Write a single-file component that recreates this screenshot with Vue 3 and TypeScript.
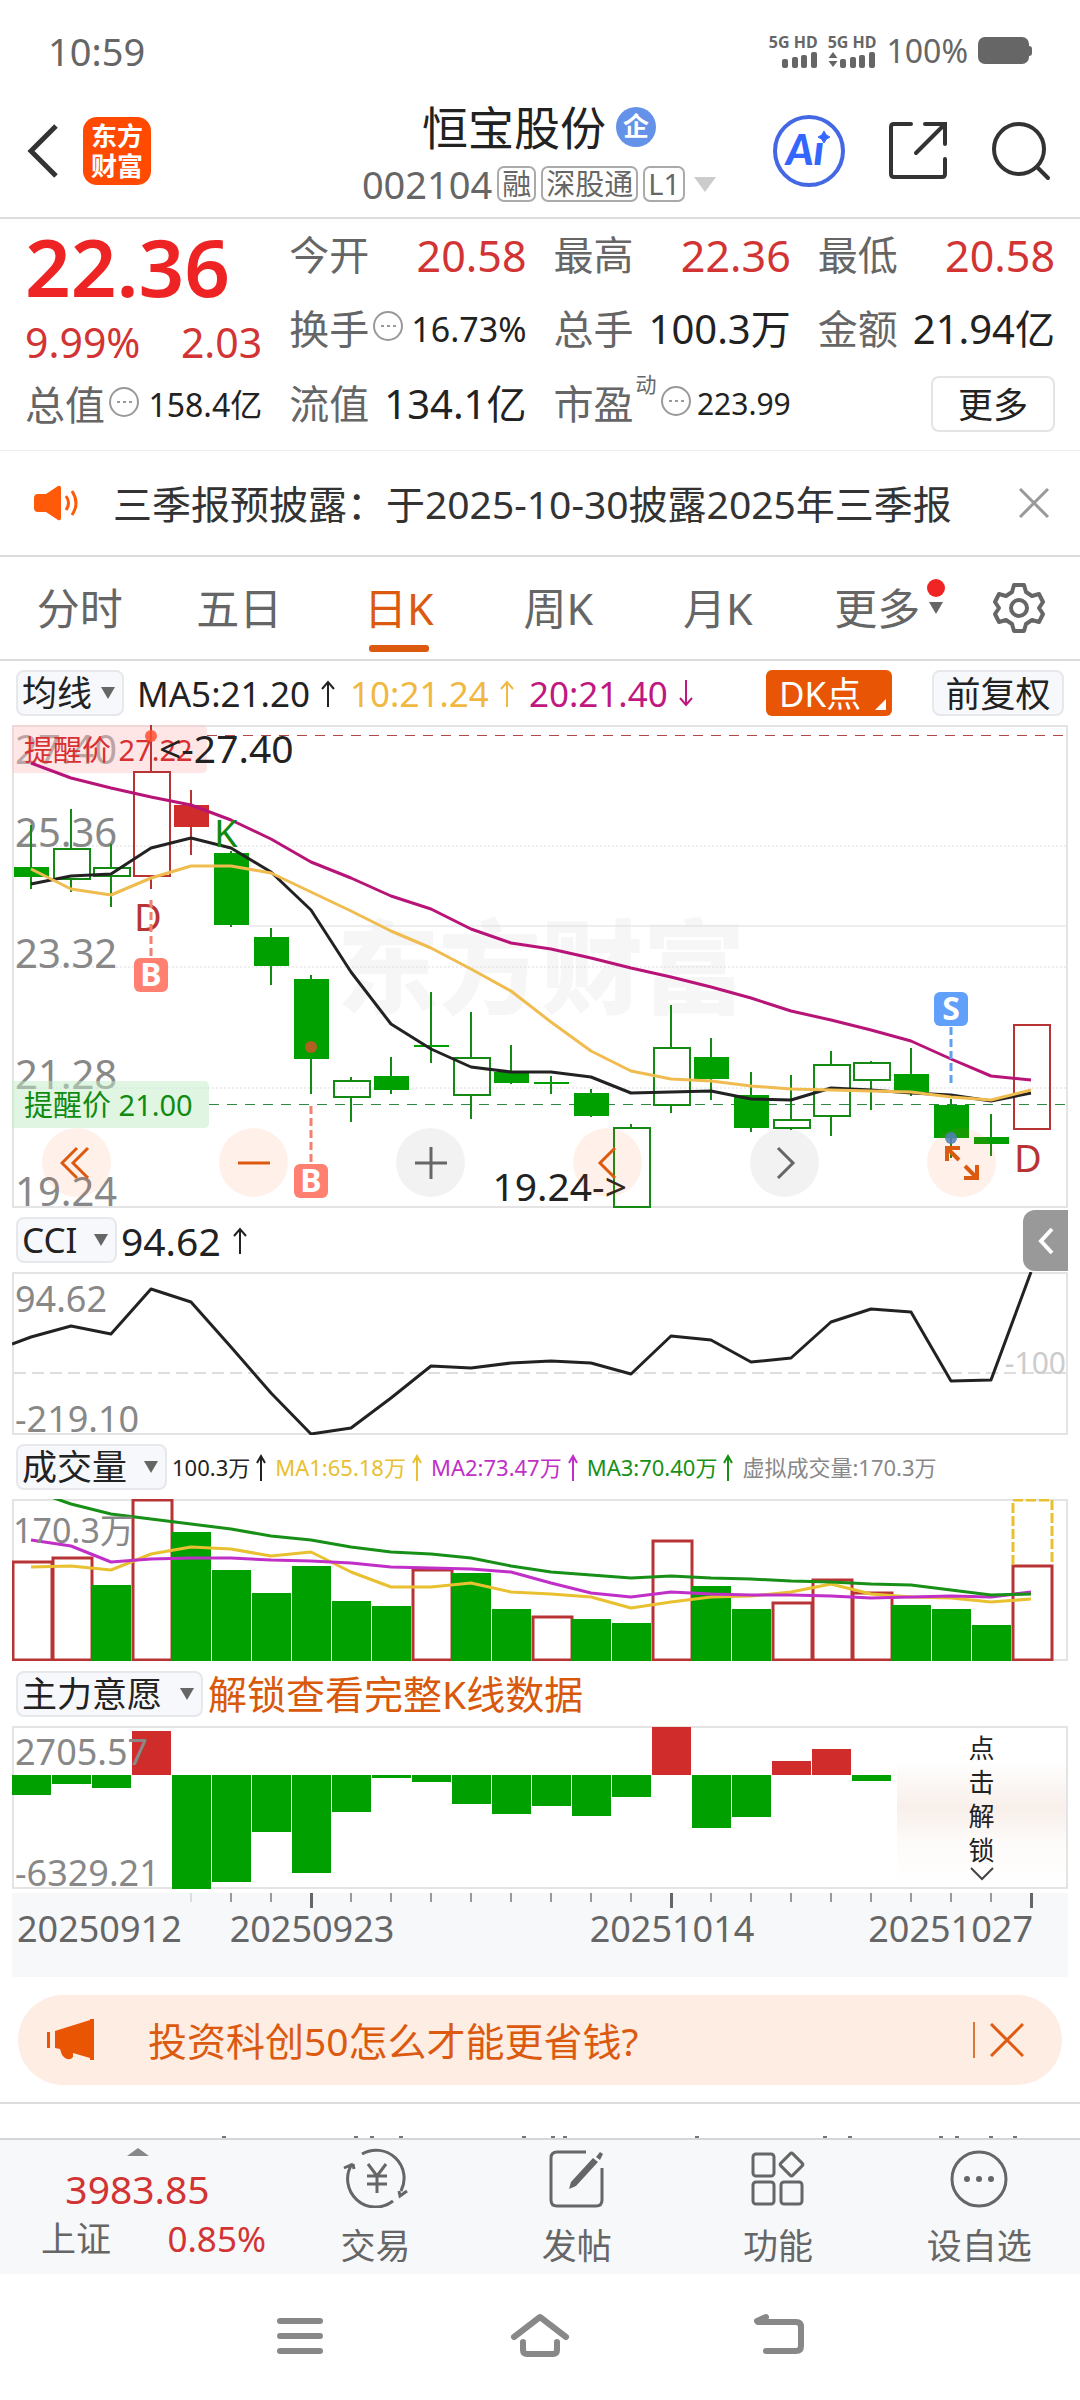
<script setup lang="ts">
import { ref } from 'vue'

type Kind = 'down' | 'hollow' | 'up' | 'solidUp'

interface Candle {
  high: number
  top: number
  bottom: number
  low: number
  kind: Kind
}

const STEP = 40
const cx = (i: number): number => 19 + STEP * i

const toPoints = (ys: number[]): string => ys.map((y, i) => `${cx(i)},${y}`).join(' ')

const rawCandles: [number, number, number, number, Kind][] = [
  [100, 142, 152, 164, 'down'],
  [84, 123, 155, 167, 'hollow'],
  [119, 142, 152, 182, 'hollow'],
  [0, 46, 152, 164, 'up'],
  [65, 80, 102, 130, 'solidUp'],
  [126, 128, 200, 202, 'down'],
  [203, 212, 241, 260, 'down'],
  [250, 254, 334, 369, 'down'],
  [352, 355, 373, 397, 'hollow'],
  [332, 351, 365, 369, 'down'],
  [267, 320, 322, 338, 'down'],
  [287, 332, 371, 394, 'hollow'],
  [320, 347, 358, 359, 'down'],
  [351, 357, 359, 369, 'down'],
  [364, 368, 391, 392, 'down'],
  [399, 402, 483, 483, 'hollow'],
  [280, 322, 381, 388, 'hollow'],
  [313, 332, 354, 375, 'down'],
  [347, 370, 403, 407, 'down'],
  [350, 394, 404, 405, 'hollow'],
  [326, 339, 392, 411, 'hollow'],
  [336, 337, 356, 385, 'hollow'],
  [323, 349, 368, 371, 'down'],
  [374, 380, 413, 433, 'down'],
  [389, 412, 419, 431, 'down'],
  [299, 299, 405, 405, 'up'],
]
const candles: Candle[] = rawCandles.map(([high, top, bottom, low, kind]) => ({ high, top, bottom, low, kind }))
const isFilled = (k: Kind): boolean => k === 'down' || k === 'solidUp'
const candleColor = (k: Kind): string => (k === 'up' ? '#b83434' : k === 'solidUp' ? '#d02c2c' : k === 'down' ? '#00a000' : '#148a14')
const wickColor = (k: Kind): string => (k === 'up' || k === 'solidUp' ? '#b83434' : '#148a14')

const ma5 = toPoints([159, 151, 149, 123, 113, 123, 147, 185, 247, 299, 324, 342, 347, 347, 352, 368, 367, 366, 374, 375, 363, 365, 368, 370, 376, 368])
const ma10 = toPoints([144, 164, 170, 153, 141, 141, 148, 167, 186, 206, 223, 244, 266, 297, 326, 346, 354, 356, 361, 364, 365, 366, 367, 372, 375, 365])
const ma20 = toPoints([38, 53, 63, 72, 80, 95, 114, 137, 153, 171, 184, 204, 218, 224, 233, 243, 252, 262, 273, 286, 295, 305, 316, 334, 351, 355])

const priceLabels = [
  { text: '27.40', y: 39 },
  { text: '25.36', y: 122 },
  { text: '23.32', y: 243 },
  { text: '21.28', y: 364 },
  { text: '19.24', y: 481 },
]

const cci = '0,72 ' + toPoints([65, 54, 62, 17, 30, 75, 121, 162, 156, 126, 94, 96, 91, 89, 91, 102, 64, 68, 90, 86, 50, 37, 40, 109, 108, 0])

const volumes: { top: number; up: boolean }[] = [63, 59, 86, 1, 33, 71, 94, 67, 102, 107, 71, 74, 110, 118, 120, 124, 42, 87, 110, 104, 81, 94, 106, 110, 126, 67].map(
  (top, i) => ({ top, up: [0, 1, 3, 10, 13, 16, 19, 20, 21, 25].includes(i) }),
)
const vma1 = toPoints([68, 67, 71, 55, 48, 50, 57, 53, 73, 88, 88, 84, 93, 95, 98, 109, 103, 98, 97, 93, 85, 95, 98, 99, 103, 100])
const vma2 = toPoints([41, 47, 63, 60, 59, 59, 61, 62, 64, 68, 69, 70, 73, 84, 94, 98, 93, 95, 96, 96, 97, 99, 98, 97, 98, 93])
const vma3 = toPoints([-9, 5, 15, 20, 25, 30, 37, 41, 48, 53, 55, 59, 67, 73, 76, 79, 77, 79, 80, 82, 83, 85, 86, 91, 96, 95])

const ZERO = 49
const flows: number[] = [69, 58, 62, 5, 163, 156, 106, 147, 86, 52, 56, 78, 88, 80, 90, 71, 1, 102, 91, 35, 23, 55]

const ticks = Array.from({ length: 22 }, (_, k) => k + 4)
const majorTicks = [7, 16, 25]

const tabs = ['分时', '五日', '日K', '周K', '月K', '更多']
const active = ref('日K')

const clippedMarks = [222, 354, 370, 399, 522, 551, 563, 695, 823, 848, 939, 955, 989, 1013]
</script>

<template>
  <div class="page">
    <div class="status">
      <span class="clock">10:59</span>
      <div class="status-right">
        <div v-for="n in 2" :key="n" class="sim">
          <span class="net">5G HD</span>
          <svg width="48" height="17" viewBox="0 0 48 17" fill="#666">
            <path v-if="n === 2" d="M5 1l4.500 6h-9zM5 16l4.500-6h-9z" />
            <rect x="12" y="8" width="6" height="9" rx="2" />
            <rect x="22" y="6" width="6" height="11" rx="2" />
            <rect x="31" y="4" width="6" height="13" rx="2" />
            <rect x="41" y="1" width="6" height="16" rx="2" />
          </svg>
        </div>
        <span class="percent">100%</span>
        <svg width="54" height="28" viewBox="0 0 54 28" fill="#666">
          <rect width="51" height="27" rx="7" />
          <path d="M51 9q3 0 3 3v4q0 3-3 3z" />
        </svg>
      </div>
    </div>

    <header class="top">
      <div class="top-left">
        <button class="bare" aria-label="返回">
          <svg width="32" height="54" viewBox="0 0 32 54" fill="none" stroke="#333" stroke-width="5"><path d="M29 2L4 27l25 25" /></svg>
        </button>
        <a class="logo" href="#"><span>东方</span><span>财富</span></a>
      </div>
      <div class="title-block">
        <h1>恒宝股份<span class="badge">企</span></h1>
        <div class="code-row">
          <span class="code">002104</span>
          <span class="tag">融</span><span class="tag">深股通</span><span class="tag">L1</span>
          <svg class="code-arrow" width="22" height="15" viewBox="0 0 22 15"><path d="M0 0h22l-11 15z" fill="#ccc" /></svg>
        </div>
      </div>
      <div class="top-right">
        <button class="bare" aria-label="Ai">
          <svg width="72" height="72" viewBox="0 0 72 72">
            <circle cx="36" cy="36" r="34" fill="none" stroke="#4468e4" stroke-width="4" />
            <text x="13" y="50" class="ai">Aı</text>
            <path d="M51 16q1.500 5 6 6-4.500 1.500-6 6-1.500-4.500-6-6 4.500-1 6-6z" fill="#3366ff" stroke="#3366ff" stroke-width="1" />
          </svg>
        </button>
        <button class="bare" aria-label="分享">
          <svg width="60" height="60" viewBox="0 0 60 60" fill="none" stroke="#333" stroke-width="4" stroke-linecap="round">
            <path d="M23 3H6Q3 3 3 6v47q0 3 3 3h48q3 0 3-3V38M37 3h20v20M57 3L28 32" />
          </svg>
        </button>
        <button class="bare" aria-label="搜索">
          <svg width="60" height="60" viewBox="0 0 60 60" fill="none" stroke="#333" stroke-width="4" stroke-linecap="round">
            <circle cx="28" cy="28" r="25" /><path d="M46 46l11 11" />
          </svg>
        </button>
      </div>
    </header>

    <section class="quote">
      <div class="col">
        <div class="last-price">22.36</div>
        <div class="cell change"><span>9.99%</span><span>2.03</span></div>
        <div class="cell r3">
          <span class="lab">总值<svg class="dots" width="31" height="31" viewBox="0 0 31 31"><circle cx="15" cy="15" r="14" /><path d="M8 15h3M14 15h3M20 15h3" /></svg></span>
          <span class="val mid">158.4亿</span>
        </div>
      </div>
      <div class="col">
        <div class="cell r1"><span class="lab">今开</span><span class="val red">20.58</span></div>
        <div class="cell r2">
          <span class="lab">换手<svg class="dots" width="31" height="31" viewBox="0 0 31 31"><circle cx="15" cy="15" r="14" /><path d="M8 15h3M14 15h3M20 15h3" /></svg></span>
          <span class="val turn">16.73%</span>
        </div>
        <div class="cell r3b"><span class="lab">流值</span><span class="val">134.1亿</span></div>
      </div>
      <div class="col">
        <div class="cell r1"><span class="lab">最高</span><span class="val red">22.36</span></div>
        <div class="cell r2"><span class="lab">总手</span><span class="val">100.3万</span></div>
        <div class="cell r3b">
          <span class="lab">市盈<sup>动</sup><svg class="dots" width="31" height="31" viewBox="0 0 31 31"><circle cx="15" cy="15" r="14" /><path d="M8 15h3M14 15h3M20 15h3" /></svg></span>
          <span class="val small">223.99</span>
        </div>
      </div>
      <div class="col">
        <div class="cell r1"><span class="lab">最低</span><span class="val red">20.58</span></div>
        <div class="cell r2"><span class="lab">金额</span><span class="val">21.94亿</span></div>
        <div class="cell r3b end"><button class="more">更多</button></div>
      </div>
    </section>

    <section class="notice">
      <svg width="46" height="36" viewBox="0 0 46 36" fill="none" stroke="#ff5a0a" stroke-width="3">
        <path d="M4 9h8L24 1q3-1 3 2v30q0 3-3 2L12 27H4q-4 0-4-4V13q0-4 4-4z" fill="#ff5a0a" stroke="none" />
        <path d="M32 11q5 7 0 14" /><path d="M38 6q8 12 0 24" />
      </svg>
      <a href="#" class="notice-text">三季报预披露：于2025-10-30披露2025年三季报</a>
      <button class="bare" aria-label="关闭">
        <svg width="30" height="30" viewBox="0 0 30 30" stroke="#999" stroke-width="3"><path d="M1 1l28 28M29 1L1 29" /></svg>
      </button>
    </section>

    <nav class="tabs">
      <button v-for="t in tabs" :key="t" class="tab" :class="{ on: t === active }" @click="active = t">
        {{ t }}
        <span v-if="t === '更多'" class="tab-extra">
          <i class="red-dot"></i>
          <svg width="14" height="12" viewBox="0 0 14 12"><path d="M0 0h14L7 12z" fill="#666" /></svg>
        </span>
      </button>
      <button class="bare gear" aria-label="设置">
        <svg width="52" height="52" viewBox="0 0 52 52" fill="none" stroke="#666" stroke-width="4" stroke-linejoin="round">
          <path d="M21 3h10l2 7 6 4 7-2 4 8-4 6 4 6-4 8-7-2-6 4-2 7H21l-2-7-6-4-7 2-4-8 4-6-4-6 4-8 7 2 6-4z" />
          <circle cx="26" cy="26" r="8" />
        </svg>
      </button>
    </nav>

    <main class="charts">
      <div class="bar">
        <label class="pick p0"><select aria-label="均线"><option>均线</option></select><i class="caret"></i></label>
        <div class="ma">
          <span>MA5:21.20<svg class="arr" width="14" height="27" viewBox="0 0 14 27"><path d="M7 27V2M1 9l6-7 6 7" /></svg></span>
          <span class="yel">10:21.24<svg class="arr" width="14" height="27" viewBox="0 0 14 27"><path d="M7 27V2M1 9l6-7 6 7" /></svg></span>
          <span class="mag">20:21.40<svg class="arr" width="14" height="27" viewBox="0 0 14 27"><path d="M7 0v25M1 18l6 7 6-7" /></svg></span>
        </div>
        <button class="dk">DK点</button>
        <button class="fq">前复权</button>
      </div>

      <div class="k-wrap">
        <svg class="chart" viewBox="0 0 1056 483">
          <text x="325" y="281" class="mark">东方财富</text>
          <g stroke="#ddd" stroke-width="1" stroke-dasharray="2 2">
            <path d="M0 121h1056M0 242h1056M0 363h1056" />
          </g>
          <path d="M236 201h820" stroke="#ddd" />
          <rect x="1" y="1" width="1054" height="481" fill="none" stroke="#e4e4e4" stroke-width="2" />
          <g class="ylab">
            <text v-for="l in priceLabels" :key="l.text" x="3" :y="l.y">{{ l.text }}</text>
          </g>
          <g stroke-dasharray="10 8" shape-rendering="crispEdges">
            <path d="M195 10h860" stroke="#b04848" />
            <path d="M197 379h858" stroke="#2c8a40" />
          </g>
          <path d="M0 0h190q5 0 5 5v38q0 5-5 5H0z" fill="#ffc8c8" fill-opacity=".45" />
          <path d="M0 356h192q5 0 5 5v37q0 5-5 5H0z" fill="#c4ecc8" fill-opacity=".5" />
          <text x="12" y="36" class="tip" fill="#d83030">提醒价 27.22</text>
          <text x="12" y="391" class="tip" fill="#108a10">提醒价 21.00</text>
          <g v-for="(c, i) in candles" :key="i">
            <path :d="`M${cx(i)} ${c.high}V${c.top}M${cx(i)} ${c.bottom}V${c.low}`" :stroke="wickColor(c.kind)" stroke-width="2" />
            <rect v-if="isFilled(c.kind)" :x="cx(i) - 17" :y="c.top" width="35" :height="c.bottom - c.top" :fill="candleColor(c.kind)" />
            <rect v-else :x="cx(i) - 17" :y="c.top + 1" width="36" :height="c.bottom - c.top - 2" fill="none" :stroke="candleColor(c.kind)" stroke-width="2" />
          </g>
          <g fill="none" stroke-width="3" stroke-linejoin="round">
            <polyline :points="ma5" stroke="#222" />
            <polyline :points="ma10" stroke="#f0bc50" />
            <polyline :points="ma20" stroke="#b81478" />
          </g>
          <text x="147" y="38" class="ext">&lt;-27.40</text>
          <text x="615" y="476" class="ext" text-anchor="end">19.24-&gt;</text>
          <text x="122" y="206" class="dkm" fill="#b83434">D</text>
          <text x="1002" y="447" class="dkm" fill="#b83434">D</text>
          <text x="202" y="122" class="dkm" fill="#108a10">K</text>
          <g stroke="#f4806f" stroke-width="3" stroke-dasharray="8 4">
            <path d="M139 175v57M299 381v57" />
            <path d="M939 302v56" stroke="#60a0f0" />
          </g>
          <circle cx="139" cy="11" r="6" fill="#ff5030" fill-opacity=".85" />
          <circle cx="299" cy="322" r="6" fill="#b06020" />
          <circle cx="939" cy="413" r="6" fill="#3f80c8" fill-opacity=".85" />
          <rect x="122" y="233" width="34" height="34" rx="6" fill="#ff7f70" />
          <rect x="282" y="439" width="34" height="34" rx="6" fill="#ff7f70" />
          <rect x="922" y="267" width="34" height="34" rx="6" fill="#60a0fa" />
          <g class="sig">
            <text x="139" y="261">B</text><text x="299" y="467">B</text><text x="939" y="295">S</text>
          </g>
        </svg>
        <div class="controls">
          <button class="round warm" aria-label="最左"><svg width="34" height="34" viewBox="0 0 34 34"><path d="M17 2L2 17l15 15M28 2L13 17l15 15" /></svg></button>
          <button class="round warm" aria-label="缩小"><svg width="34" height="34" viewBox="0 0 34 34"><path d="M1 17h32" /></svg></button>
          <button class="round" aria-label="放大"><svg width="34" height="34" viewBox="0 0 34 34"><path d="M1 17h32M17 1v32" /></svg></button>
          <button class="round warm" aria-label="左移"><svg width="22" height="34" viewBox="0 0 22 34"><path d="M18 2L3 17l15 15" /></svg></button>
          <button class="round" aria-label="右移"><svg width="22" height="34" viewBox="0 0 22 34"><path d="M4 2l15 15L4 32" /></svg></button>
          <button class="round warm" aria-label="全屏"><svg width="34" height="34" viewBox="0 0 34 34" class="thick"><path d="M2 15V2h13M2 2l12 12M32 19v13H19M32 32L20 20" /></svg></button>
        </div>
      </div>

      <div class="bar">
        <label class="pick p1"><select aria-label="CCI"><option>CCI</option></select><i class="caret"></i></label>
        <span class="cci-val">94.62<svg class="arr" width="14" height="27" viewBox="0 0 14 27"><path d="M7 27V2M1 9l6-7 6 7" /></svg></span>
        <button class="side" aria-label="展开"><svg width="18" height="28" viewBox="0 0 18 28"><path d="M15 2L4 14l11 12" fill="none" stroke="#fff" stroke-width="4" /></svg></button>
      </div>
      <svg class="chart" viewBox="0 0 1056 163">
        <rect x="1" y="1" width="1054" height="161" fill="none" stroke="#e4e4e4" stroke-width="2" />
        <path d="M2 101h1052" stroke="#ddd" stroke-width="2" stroke-dasharray="12 6" />
        <g class="sublab"><text x="3" y="40">94.62</text><text x="3" y="160">-219.10</text></g>
        <text x="1054" y="102" class="hundred" text-anchor="end">-100</text>
        <polyline :points="cci" fill="none" stroke="#222" stroke-width="3" stroke-linejoin="round" />
      </svg>

      <div class="bar">
        <label class="pick p2"><select aria-label="成交量"><option>成交量</option></select><i class="caret"></i></label>
        <div class="vol">
          <span>100.3万<svg class="arr" width="10" height="27" viewBox="0 0 10 27"><path d="M5 27V2M1 9l4-7 4 7" /></svg></span>
          <span class="vy">MA1:65.18万<svg class="arr" width="10" height="27" viewBox="0 0 10 27"><path d="M5 27V2M1 9l4-7 4 7" /></svg></span>
          <span class="vm">MA2:73.47万<svg class="arr" width="10" height="27" viewBox="0 0 10 27"><path d="M5 27V2M1 9l4-7 4 7" /></svg></span>
          <span class="vg">MA3:70.40万<svg class="arr" width="10" height="27" viewBox="0 0 10 27"><path d="M5 27V2M1 9l4-7 4 7" /></svg></span>
          <span class="vx">虚拟成交量:170.3万</span>
        </div>
      </div>
      <svg class="chart" viewBox="0 0 1056 162">
        <rect x="1" y="1" width="1054" height="160" fill="none" stroke="#e4e4e4" stroke-width="2" />
        <template v-for="(v, i) in volumes" :key="i">
          <rect v-if="v.up" :x="i * STEP + 1" :y="v.top" width="39" :height="161 - v.top" fill="#fff" stroke="#b83434" stroke-width="3" />
          <rect v-else :x="i * STEP" :y="v.top" width="39" :height="162 - v.top" fill="#00a000" />
        </template>
        <path d="M1001 66V1h39v65" fill="none" stroke="#e8c030" stroke-width="3" stroke-dasharray="10 3" />
        <g fill="none" stroke-width="3" stroke-linejoin="round">
          <polyline :points="vma1" stroke="#e8c030" />
          <polyline :points="vma2" stroke="#c030c8" />
          <polyline :points="vma3" stroke="#189018" />
        </g>
        <text x="1" y="44" class="vlab">170.3万</text>
      </svg>

      <div class="bar tall">
        <label class="pick p3"><select aria-label="主力意愿"><option>主力意愿</option></select><i class="caret"></i></label>
        <a href="#" class="unlock">解锁查看完整K线数据</a>
      </div>
      <div class="flow-wrap">
        <svg class="chart" viewBox="0 0 1056 163">
          <rect x="1" y="1" width="1054" height="161" fill="none" stroke="#e4e4e4" stroke-width="2" />
          <rect
            v-for="(v, i) in flows"
            :key="i"
            :x="i * STEP"
            :y="Math.min(v, ZERO)"
            width="39"
            :height="Math.abs(v - ZERO)"
            :fill="v < ZERO ? '#d02c2c' : '#00a000'"
          />
          <g class="sublab"><text x="3" y="39">2705.57</text><text x="3" y="160">-6329.21</text></g>
        </svg>
        <button class="lock">
          <span>点</span><span>击</span><span>解</span><span>锁</span>
          <svg width="24" height="14" viewBox="0 0 24 14"><path d="M1 1l11 11L23 1" fill="none" stroke="#444" stroke-width="2" /></svg>
        </button>
      </div>
      <svg class="chart axis" viewBox="0 0 1056 84">
        <rect width="1056" height="84" fill="#f7f8fa" />
        <rect
          v-for="t in ticks"
          :key="t"
          :x="cx(t) - 1"
          y="0"
          :width="majorTicks.includes(t) ? 3 : 2"
          :height="majorTicks.includes(t) ? 15 : 9"
          :fill="t === 4 ? '#ddd' : majorTicks.includes(t) ? '#666' : '#999'"
        />
        <text x="5" y="49">20250912</text>
        <text x="300" y="49" text-anchor="middle">20250923</text>
        <text x="660" y="49" text-anchor="middle">20251014</text>
        <text x="1021" y="49" text-anchor="end">20251027</text>
      </svg>
    </main>

    <aside class="promo">
      <svg width="48" height="42" viewBox="0 0 48 42" fill="#ea5504">
        <path d="M0 13h3v16H0zM8 12L43 1v38L26 34v4q-3 4-8 1l-3-3-2-6-5-1zM43 0h4v41h-4z" />
      </svg>
      <a href="#">投资科创50怎么才能更省钱?</a>
      <i class="vline"></i>
      <button class="bare" aria-label="关闭">
        <svg width="34" height="34" viewBox="0 0 34 34" stroke="#e05a10" stroke-width="3"><path d="M1 1l32 32M33 1L1 33" /></svg>
      </button>
    </aside>

    <div class="under">
      <svg class="clip" viewBox="0 0 1080 2"><rect v-for="m in clippedMarks" :key="m" :x="m" y="0" width="4" height="2" fill="#777" /></svg>
    </div>

    <nav class="dock">
      <a class="index" href="#">
        <svg width="22" height="8" viewBox="0 0 22 8"><path d="M0 8L11 0l11 8z" fill="#888" /></svg>
        <span class="idx">3983.85</span>
        <span class="idx-row"><span>上证</span><span class="red2">0.85%</span></span>
      </a>
      <button class="item">
        <svg width="66" height="60" viewBox="0 0 66 60" fill="none" stroke="#666" stroke-width="3">
          <path d="M19 6A28 28 0 0 1 58 43M50 53A28 28 0 0 1 9 16M1 20l9-4M10 16l1 5M56 43l1 5 7-5" />
          <path d="M25 16l9 12 9-12M34 28v17M24 28h20M24 36h20" />
        </svg>交易
      </button>
      <button class="item">
        <svg width="56" height="60" viewBox="0 0 56 60" fill="none" stroke="#666" stroke-width="3">
          <path d="M37 4H8Q2 4 2 10v42q0 6 6 6h39q6 0 6-6V20" />
          <path d="M44 10l5 4-22 24-7 3 2-7z" fill="#666" stroke="none" /><path d="M47 9l4-5 3 2-3 6z" fill="#666" stroke="none" />
        </svg>发帖
      </button>
      <button class="item">
        <svg width="56" height="60" viewBox="0 0 56 60" fill="none" stroke="#666" stroke-width="3">
          <rect x="3" y="6" width="21" height="22" rx="3" /><rect x="3" y="34" width="21" height="22" rx="3" /><rect x="31" y="34" width="21" height="22" rx="3" />
          <rect x="33" y="8" width="17" height="17" rx="2" transform="rotate(45 41.500 16.500)" />
        </svg>功能
      </button>
      <button class="item">
        <svg width="60" height="60" viewBox="0 0 60 60" fill="none" stroke="#666" stroke-width="3">
          <circle cx="30" cy="31" r="27" />
          <g fill="#666" stroke="none"><circle cx="18" cy="31" r="3" /><circle cx="30" cy="31" r="3" /><circle cx="42" cy="31" r="3" /></g>
        </svg>设自选
      </button>
    </nav>

    <div class="sys">
      <button class="bare" aria-label="菜单"><svg width="60" height="46" viewBox="0 0 60 46" stroke="#888" stroke-width="6" stroke-linecap="round"><path d="M10 8h40M10 23h40M10 38h40" /></svg></button>
      <button class="bare" aria-label="主页"><svg width="60" height="46" viewBox="0 0 60 46" fill="none" stroke="#888" stroke-width="6" stroke-linecap="round" stroke-linejoin="round"><path d="M4 24L30 4l26 20" /><path d="M13 29v8q0 4 4 4h26q4 0 4-4v-8" /></svg></button>
      <button class="bare" aria-label="后退"><svg width="60" height="46" viewBox="0 0 60 46" fill="none" stroke="#888" stroke-width="6" stroke-linecap="round"><path d="M16 4L7 8M8 9h38q5 0 5 5v19q0 5-5 5H16" /></svg></button>
    </div>
  </div>
</template>

<style>
body {
  background: #fff;
}
</style>

<style scoped>
.page {
  font-family: 'Noto Sans', 'Noto Sans CJK SC', sans-serif;
  color: #222;
  background: #fff;
  line-height: 1;
}
button,
select {
  font: inherit;
  color: inherit;
  border: 0;
  background: none;
  padding: 0;
  margin: 0;
}
a {
  color: inherit;
  text-decoration: none;
}
svg {
  display: block;
  flex: none;
}
.bare {
  display: block;
}

.status {
  height: 100px;
  display: flex;
  align-items: center;
  justify-content: space-between;
  padding: 2px 48px 0;
  box-sizing: border-box;
  color: #666;
}
.clock {
  font-size: 38px;
}
.status-right {
  display: flex;
  align-items: center;
  gap: 10px;
}
.sim {
  display: flex;
  flex-direction: column;
  align-items: flex-end;
}
.net {
  font-size: 16px;
  line-height: 17px;
  font-weight: 700;
}
.percent {
  font-size: 32px;
}

.top {
  display: grid;
  grid-template-columns: 1fr auto 1fr;
  align-items: center;
  height: 119px;
  box-sizing: border-box;
  padding: 0 29px 15px 27px;
  border-bottom: 2px solid #ddd;
}
.top-left,
.top-right {
  display: flex;
  align-items: center;
}
.top-left {
  gap: 24px;
}
.top-right {
  justify-content: flex-end;
  gap: 43px;
}
.logo {
  width: 68px;
  height: 68px;
  border-radius: 14px;
  background: #ff4a00;
  color: #fff;
  font-size: 26px;
  line-height: 30px;
  font-weight: 700;
  display: flex;
  flex-direction: column;
  align-items: center;
  justify-content: center;
}
.title-block {
  display: flex;
  flex-direction: column;
  align-items: center;
  gap: 16px;
  padding-top: 4px;
}
h1 {
  margin: 0;
  font-size: 46px;
  line-height: 46px;
  font-weight: 400;
  display: flex;
  align-items: center;
  gap: 10px;
}
.badge {
  width: 40px;
  height: 40px;
  border-radius: 50%;
  background: #6492e8;
  color: #fff;
  font-size: 26px;
  line-height: 39px;
  font-weight: 700;
  text-align: center;
}
.code-row {
  display: flex;
  align-items: center;
  gap: 5px;
  color: #666;
}
.code {
  font-size: 38px;
  line-height: 36px;
}
.tag {
  height: 36px;
  box-sizing: border-box;
  border: 2px solid #aaa;
  border-radius: 7px;
  padding: 0 3px;
  font-size: 29px;
  line-height: 32px;
}
.code-arrow {
  margin-left: 4px;
}
.ai {
  font-family: Lato, sans-serif;
  font-weight: 900;
  font-style: italic;
  font-size: 42px;
  fill: #3366ff;
}

.quote {
  display: grid;
  grid-template-columns: repeat(4, 1fr);
  gap: 27px;
  padding: 0 25px 9px;
  border-bottom: 1px solid #eee;
}
.cell {
  display: flex;
  align-items: center;
  justify-content: space-between;
  white-space: nowrap;
}
.last-price {
  height: 94px;
  line-height: 94px;
  font-size: 80px;
  font-weight: 600;
  color: #ee2424;
}
.change {
  height: 58px;
  font-size: 41px;
  color: #d23434;
}
.r1 {
  height: 72px;
}
.r2 {
  height: 76px;
}
.r3 {
  height: 68px;
}
.r3b {
  height: 74px;
}
.end {
  justify-content: flex-end;
}
.lab {
  display: flex;
  align-items: center;
  font-size: 40px;
  color: #666;
}
.lab sup {
  font-size: 21px;
  line-height: 21px;
  align-self: flex-start;
  margin: -10px 0 0 2px;
}
.dots {
  fill: none;
  stroke: #999;
  stroke-width: 2;
  margin: -6px 0 0 4px;
}
.val {
  font-size: 40px;
}
.val.red {
  font-size: 43px;
  color: #d23434;
}
.val.mid {
  font-size: 32px;
}
.val.turn {
  font-size: 34px;
}
.val.small {
  font-size: 30px;
}
.more {
  width: 124px;
  height: 56px;
  box-sizing: border-box;
  border: 2px solid #e4e4e4;
  border-radius: 8px;
  font-size: 35px;
}

.notice {
  display: flex;
  align-items: center;
  height: 106px;
  box-sizing: border-box;
  padding: 0 31px 0 34px;
  border-bottom: 2px solid #ddd;
}
.notice-text {
  flex: 1;
  padding-left: 33px;
  font-size: 39px;
  color: #333;
  white-space: nowrap;
}

.tabs {
  display: flex;
  height: 104px;
  box-sizing: border-box;
  border-bottom: 2px solid #ddd;
  color: #666;
}
.tab {
  flex: 1;
  position: relative;
  font-size: 43px;
}
.tab.on {
  color: #dc5a10;
}
.tab.on::after {
  content: '';
  position: absolute;
  left: 50%;
  bottom: 7px;
  width: 60px;
  height: 7px;
  margin-left: -30px;
  border-radius: 3px;
  background: #dc5a10;
}
.tab-extra {
  position: absolute;
  right: 12px;
  top: 22px;
  display: flex;
  flex-direction: column;
  align-items: center;
  gap: 5px;
}
.red-dot {
  width: 18px;
  height: 18px;
  border-radius: 50%;
  background: #f02424;
}
.gear {
  width: 123px;
  display: flex;
  align-items: center;
  justify-content: center;
}

.charts {
  padding: 0 12px;
}
.chart {
  width: 100%;
  height: auto;
  overflow: hidden;
}
.bar {
  height: 64px;
  display: flex;
  align-items: center;
  padding: 0 4px;
  position: relative;
  white-space: nowrap;
}
.bar.tall {
  height: 65px;
}
.pick {
  position: relative;
  flex: none;
}
.pick select {
  appearance: none;
  display: block;
  width: 100%;
  height: 46px;
  box-sizing: border-box;
  padding: 0 0 0 4px;
  font-size: 35px;
  line-height: 42px;
  border: 2px solid #e6e8ec;
  border-radius: 8px;
  background: #f7f8fb;
}
.caret {
  position: absolute;
  right: 9px;
  top: 17px;
  border: 7px solid transparent;
  border-top: 12px solid #666;
  border-bottom: 0;
  pointer-events: none;
}
.p0 {
  width: 108px;
}
.p1 {
  width: 101px;
}
.p2 {
  width: 151px;
}
.p3 {
  width: 187px;
}
.arr {
  fill: none;
  stroke: currentColor;
  stroke-width: 2;
}
.ma {
  flex: 1;
  display: flex;
  gap: 15px;
  margin-left: 13px;
  font-size: 35px;
}
.ma span {
  display: flex;
  align-items: center;
  gap: 11px;
}
.yel {
  color: #f0b840;
}
.mag {
  color: #c01880;
}
.dk {
  width: 126px;
  height: 46px;
  border-radius: 6px;
  background: #e85504;
  color: #fff;
  font-size: 35px;
  text-align: left;
  padding-left: 13px;
  position: relative;
  margin-right: 40px;
}
.dk::after {
  content: '';
  position: absolute;
  right: 6px;
  bottom: 6px;
  border-left: 11px solid transparent;
  border-bottom: 11px solid #fff;
}
.fq {
  width: 132px;
  height: 46px;
  box-sizing: border-box;
  border: 2px solid #e6e8ec;
  border-radius: 8px;
  background: #f7f8fb;
  font-size: 35px;
}

.k-wrap,
.flow-wrap {
  position: relative;
}
.mark {
  font-size: 102px;
  font-weight: 900;
  fill: #f6f6f6;
}
.ylab text {
  font-size: 40px;
  fill: #888;
}
.tip {
  font-size: 29px;
}
.ext {
  font-size: 39px;
  fill: #222;
}
.dkm {
  font-size: 38px;
}
.sig text {
  font-size: 32px;
  font-weight: 700;
  fill: #fff;
  text-anchor: middle;
}
.controls {
  position: absolute;
  left: 0;
  right: 0;
  bottom: 11px;
  display: flex;
  justify-content: space-between;
  padding: 0 72px 0 30px;
}
.round {
  width: 69px;
  height: 69px;
  border-radius: 50%;
  background: rgba(0, 0, 0, 0.05);
  display: flex;
  align-items: center;
  justify-content: center;
}
.round.warm {
  background: rgba(255, 100, 20, 0.09);
}
.round svg {
  fill: none;
  stroke: #666;
  stroke-width: 3;
}
.round.warm svg {
  stroke: #dc5a10;
}
.round.warm .thick {
  stroke-width: 4;
}
.cci-val {
  display: flex;
  align-items: center;
  gap: 12px;
  margin-left: 4px;
  font-size: 39px;
}
.side {
  position: absolute;
  right: 0;
  top: 2px;
  width: 45px;
  height: 61px;
  border-radius: 12px 0 0 12px;
  background: #999;
  display: flex;
  align-items: center;
  justify-content: center;
}
.sublab text {
  font-size: 36px;
  fill: #888;
}
.hundred {
  font-size: 30px;
  fill: #ccc;
}
.vlab {
  font-size: 34px;
  fill: #888;
}
.vol {
  display: flex;
  align-items: center;
  gap: 9px;
  margin-left: 5px;
  font-size: 22px;
}
.vol span {
  display: flex;
  align-items: center;
  gap: 6px;
}
.vy {
  color: #e8c030;
}
.vm {
  color: #c030c8;
}
.vg {
  color: #189018;
}
.vx {
  color: #888;
}
.unlock {
  margin-left: 5px;
  font-size: 39px;
  color: #d8590c;
}
.lock {
  position: absolute;
  top: 2px;
  bottom: 2px;
  right: 2px;
  width: 16%;
  display: flex;
  flex-direction: column;
  align-items: center;
  justify-content: center;
  padding-bottom: 4px;
  font-size: 26px;
  line-height: 34px;
  background: linear-gradient(#fff 20%, #f8efea 50%, #fdfbf9 72%, #fff);
}
.axis {
  margin-top: 4px;
}
.axis text {
  font-size: 36px;
  fill: #666;
}

.promo {
  display: flex;
  align-items: center;
  height: 90px;
  margin: 18px 18px 17px;
  padding: 0 38px 0 29px;
  border-radius: 45px;
  background: #fdede3;
  color: #dc5a10;
}
.promo a {
  flex: 1;
  padding-left: 53px;
  font-size: 39px;
}
.vline {
  width: 2px;
  height: 36px;
  background: #d8763c;
  margin-right: 15px;
}
.under {
  height: 36px;
  box-sizing: border-box;
  border-top: 2px solid #ddd;
  display: flex;
  align-items: flex-end;
}
.clip {
  width: 100%;
}

.dock {
  display: flex;
  height: 136px;
  box-sizing: border-box;
  border-top: 2px solid #d4d6da;
  background: #f7f8fa;
  color: #666;
}
.index {
  width: 275px;
  display: flex;
  flex-direction: column;
  align-items: center;
  padding-top: 8px;
  box-sizing: border-box;
}
.idx {
  margin-top: 10px;
  font-size: 39px;
  line-height: 46px;
  color: #d23434;
}
.idx-row {
  align-self: stretch;
  display: flex;
  justify-content: space-between;
  margin-top: 4px;
  padding: 0 9px 0 41px;
  font-size: 35px;
  line-height: 46px;
}
.red2 {
  color: #d23434;
}
.item {
  flex: 1;
  display: flex;
  flex-direction: column;
  align-items: center;
  padding-top: 8px;
  font-size: 35px;
  line-height: 36px;
  gap: 20px;
}
.sys {
  display: flex;
  align-items: center;
  justify-content: center;
  gap: 180px;
  height: 124px;
  box-sizing: border-box;
}
</style>
